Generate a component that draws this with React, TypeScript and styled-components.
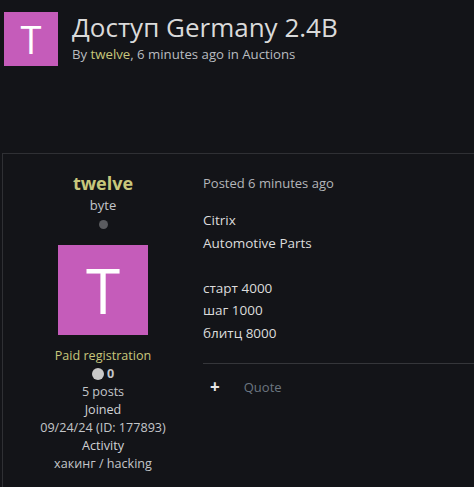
import styled, { createGlobalStyle } from "styled-components";

const Global = createGlobalStyle`
  html, body {
    margin: 0;
    padding: 0;
    background: #131418;
    overflow: hidden;
  }
  body {
    font-family: "Open Sans", "Noto Sans", sans-serif;
    color: #d6d6d6;
  }
`;

const Page = styled.div`
  width: 474px;
  height: 487px;
  overflow: hidden;
`;

const Header = styled.div`
  display: flex;
  align-items: flex-start;
  gap: 14px;
  padding: 9px 0 0 4px;
`;

const Avatar = styled.div<{ size: number; fontSize: number }>`
  width: ${(p) => p.size}px;
  height: ${(p) => p.size}px;
  flex-shrink: 0;
  background: #c55cba;
  color: #fff;
  display: flex;
  align-items: center;
  justify-content: center;
  font-size: ${(p) => p.fontSize}px;
  line-height: 1;
`;

const HeaderAvatar = styled(Avatar)`
  margin-top: 3px;
`;

const TitleBlock = styled.div`
  display: flex;
  flex-direction: column;
`;

const Title = styled.h1`
  margin: 0;
  font-size: 26px;
  font-weight: 400;
  line-height: 36px;
  color: #dadada;
`;

const Meta = styled.div`
  font-size: 13.2px;
  line-height: 18px;
  color: #b9bcc0;
`;

const Author = styled.span`
  color: #c8c77c;
`;

const Post = styled.div`
  margin: 87px 0 0 2px;
  border: 1px solid #2f3034;
  border-right: none;
  border-bottom: none;
  display: flex;
  height: 400px;
`;

const Side = styled.div`
  width: 200px;
  flex-shrink: 0;
  display: flex;
  flex-direction: column;
  align-items: center;
  padding-top: 17px;
  font-size: 12.6px;
  line-height: 18px;
  color: #c3c6ca;
`;

const Name = styled.div`
  font-size: 18px;
  font-weight: 700;
  line-height: 24px;
  color: #c8c77c;
`;

const Rank = styled.div`
  margin-top: 1px;
  font-size: 13px;
`;

const Dot = styled.span<{ size: number; color: string }>`
  display: inline-block;
  width: ${(p) => p.size}px;
  height: ${(p) => p.size}px;
  border-radius: 50%;
  background: ${(p) => p.color};
`;

const StatusDot = styled(Dot)`
  margin: 6px 0 16px;
`;

const Group = styled.div`
  margin-top: 12px;
  color: #c8c77c;
`;

const Rep = styled.div`
  display: flex;
  align-items: center;
  gap: 3px;
  font-weight: 700;
`;

const Label = styled.div`
  color: #d0d2d5;
`;

const Main = styled.div`
  flex: 1;
  padding-top: 20px;
  min-width: 0;
`;

const Posted = styled.div`
  font-size: 13px;
  line-height: 18px;
  color: #b3b6ba;
`;

const Body = styled.div`
  margin-top: 17px;
  font-size: 13.5px;
  line-height: 22.5px;
  color: #dcdcdc;
`;

const Gap = styled.div`
  height: 22.5px;
`;

const Footer = styled.div`
  margin-top: 19px;
  border-top: 1px solid #35363a;
  display: flex;
  align-items: center;
  gap: 24px;
  padding: 13px 0 0 7px;
`;

const Plus = styled.span`
  font-size: 17px;
  font-weight: 700;
  color: #e6e6e6;
  line-height: 20px;
`;

const Quote = styled.span`
  font-size: 13px;
  color: #6c7680;
`;

export default function App() {
  return (
    <Page>
      <Global />
      <Header>
        <HeaderAvatar size={54} fontSize={38}>T</HeaderAvatar>
        <TitleBlock>
          <Title>Доступ Germany 2.4B</Title>
          <Meta>
            By <Author>twelve</Author>, 6 minutes ago in Auctions
          </Meta>
        </TitleBlock>
      </Header>
      <Post>
        <Side>
          <Name>twelve</Name>
          <Rank>byte</Rank>
          <StatusDot size={9} color="#5a5b5f" />
          <Avatar size={90} fontSize={62}>T</Avatar>
          <Group>Paid registration</Group>
          <Rep>
            <Dot size={12} color="#c8c8c8" />0
          </Rep>
          <div>5 posts</div>
          <Label>Joined</Label>
          <div>09/24/24 (ID: 177893)</div>
          <Label>Activity</Label>
          <div>хакинг / hacking</div>
        </Side>
        <Main>
          <Posted>Posted 6 minutes ago</Posted>
          <Body>
            <div>Citrix</div>
            <div>Automotive Parts</div>
            <Gap />
            <div>старт 4000</div>
            <div>шаг 1000</div>
            <div>блитц 8000</div>
          </Body>
          <Footer>
            <Plus>+</Plus>
            <Quote>Quote</Quote>
          </Footer>
        </Main>
      </Post>
    </Page>
  );
}
